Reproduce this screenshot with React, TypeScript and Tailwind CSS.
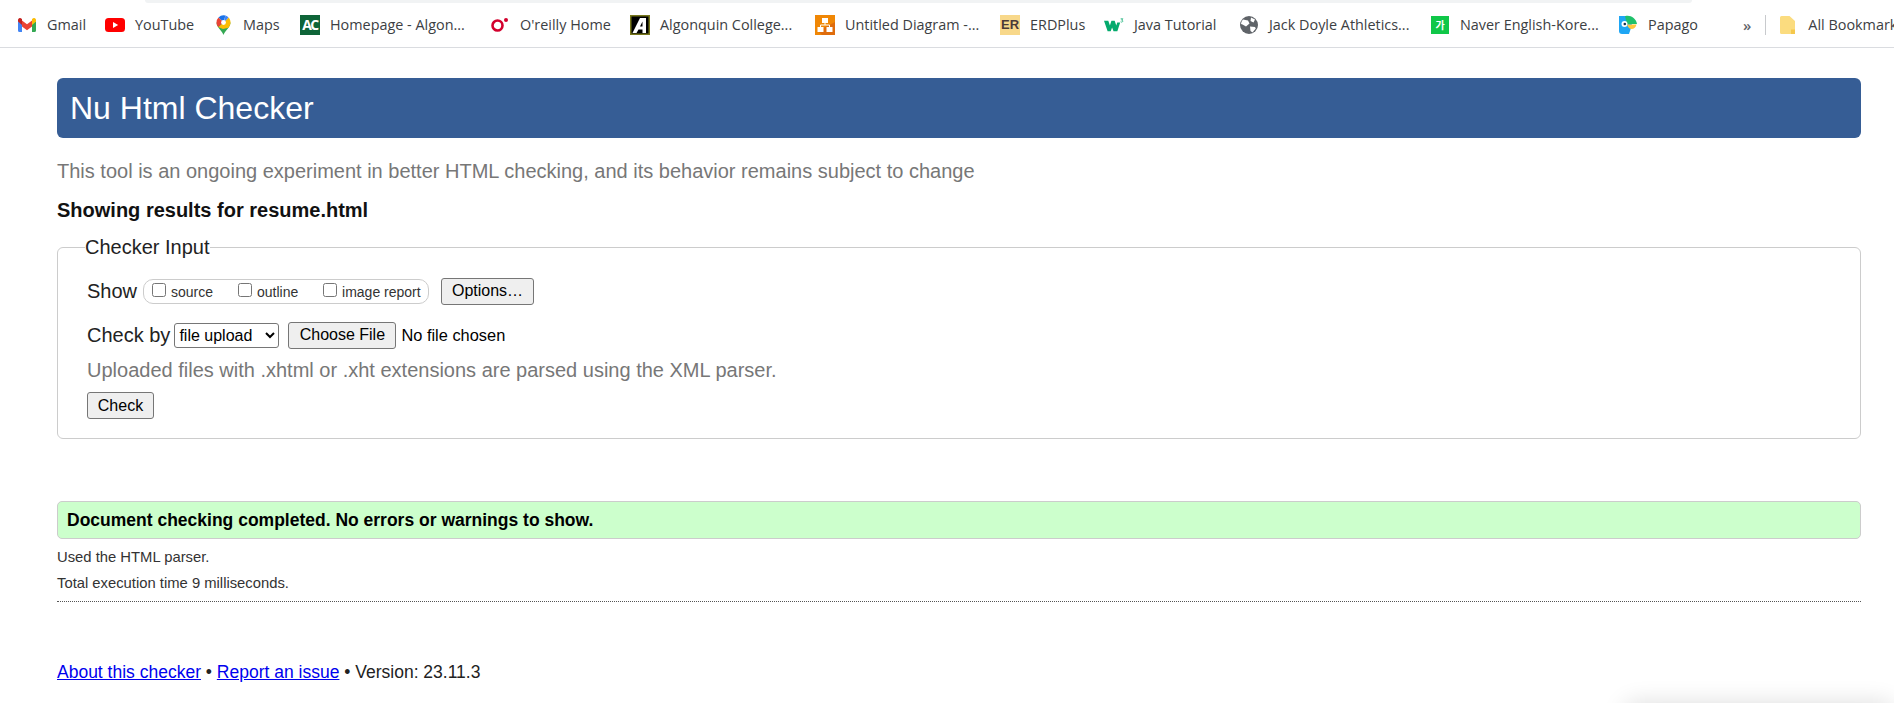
const arial = '[font-family:"Liberation_Sans",Arial,sans-serif]';

function GmailIcon() {
  return (
    <svg width="18" height="14" viewBox="0 0 18 14">
      <path d="M0 3v9.500A1.500 1.500 0 0 0 1.500 14H4V6z" fill="#4285f4" />
      <path d="M14 6v8h2.500a1.500 1.500 0 0 0 1.500-1.500V3z" fill="#34a853" />
      <path d="M4 8.500V2.500L9 6.300l5-3.800v6L9 12.200z" fill="#ea4335" />
      <path d="M0 3.500V2a2 2 0 0 1 3.200-1.600L4 1v6z" fill="#c5221f" />
      <path d="M14 7V1l.8-.6A2 2 0 0 1 18 2v1.500z" fill="#fbbc04" />
    </svg>
  );
}

function YoutubeIcon() {
  return (
    <svg width="20" height="14" viewBox="0 0 20 14">
      <rect width="20" height="14" rx="3.500" fill="#ff0000" />
      <path d="M8 4v6l5.200-3z" fill="#fff" />
    </svg>
  );
}

function MapsIcon() {
  return (
    <svg width="15" height="20" viewBox="0 0 15 20">
      <path d="M7.500 20c-.8-3.500-7-7.500-7-12.500h14c0 5-6.200 9-7 12.500z" fill="#34a853" />
      <path d="M2.200 12 7.500 7.500 12.500 2.500c1.300 1.300 2 3 2 5 0 2-1 3.700-2 5.200L7 14z" fill="#fbbc04" />
      <path d="M.5 7.500a7 7 0 0 1 2-5L7.500 7 2.200 12C1.200 10.700.5 9.200.5 7.500z" fill="#ea4335" />
      <path d="M2.500 2.500a7 7 0 0 1 7-2L7.500 7z" fill="#1a73e8" />
      <path d="M9.500.5a7 7 0 0 1 3 2L7.500 8z" fill="#4285f4" />
      <circle cx="7.500" cy="7.500" r="2.400" fill="#fff" />
    </svg>
  );
}

function AcIcon() {
  return (
    <span className="flex size-[20px] items-center justify-center bg-[#0e6438] text-[14px] leading-none font-bold tracking-[-1.500px] text-white">
      AC
    </span>
  );
}

function OreillyIcon() {
  return (
    <svg width="18" height="14" viewBox="0 0 18 14">
      <ellipse cx="6.500" cy="7.500" rx="5" ry="5" fill="none" stroke="#d3002d" strokeWidth="2.600" />
      <circle cx="15" cy="2" r="2" fill="#d3002d" />
    </svg>
  );
}

function AlgonquinIcon() {
  return (
    <svg width="20" height="20" viewBox="0 0 20 20">
      <rect x="0.750" y="0.750" width="18.500" height="18.500" fill="#000" stroke="#77771a" strokeWidth="1.500" />
      <path fillRule="evenodd" d="M2.500 18 10 3h6v15h-3.500v-3.500H8.500L6.500 18zM10 11.500h2.500V6.500z" fill="#fff" />
    </svg>
  );
}

function DiagramIcon() {
  return (
    <svg width="20" height="20" viewBox="0 0 20 20">
      <rect width="20" height="20" fill="#f08705" />
      <path d="M20 7v13H7l-4-4z" fill="#df6c0c" />
      <rect x="7" y="3" width="6" height="5" fill="#fff" />
      <rect x="2.500" y="12" width="6" height="5" fill="#fff" />
      <rect x="11.500" y="12" width="6" height="5" fill="#fff" />
      <path d="M10 8v2M5.500 12v-2h9v2" fill="none" stroke="#fff" />
    </svg>
  );
}

function ErIcon() {
  return (
    <span className={`flex size-[20px] items-center justify-center bg-[#f8d88a] text-[13px] leading-none font-bold text-[#4a3b38] ${arial}`}>
      ER
    </span>
  );
}

function W3Icon() {
  return (
    <svg width="21" height="14" viewBox="0 0 21 14">
      <path d="M0 2.500h4.500l1.700 5 1.600-5h3.400l1.700 5 1-3h3.100l-3 9H10l-1.500-4-1.500 4H3.800z" fill="#04aa6d" />
      <path d="M17.500.5h2.300l-1.300 1.400c1 .1 1.500.7 1.100 1.500-.4.700-1.400.7-2.100.2" fill="none" stroke="#04aa6d" strokeWidth="0.800" />
    </svg>
  );
}

function GlobeIcon() {
  return (
    <svg width="18" height="18" viewBox="0 0 18 18">
      <circle cx="9" cy="9" r="9" fill="#5f6368" />
      <path d="M3 3.500 8 4.500l1.500 3L6 10.500l-3.500-2L1 8C1.200 6.200 1.900 4.700 3 3.500zM11 1.500l4 2-1.500 3-3-1.500zM10 10.500l5 .5.800 1.500L12.500 16.500l-2-1.500z" fill="#fff" />
    </svg>
  );
}

function NaverIcon() {
  return (
    <span className="flex h-[18px] w-[18px] items-center justify-center bg-[#0fc748] text-[10px] leading-none font-bold text-white [font-family:'Noto_Sans_CJK_KR',sans-serif]">
      가
    </span>
  );
}

function PapagoIcon() {
  return (
    <svg width="18" height="19" viewBox="0 0 18 19">
      <path d="M0 1h9l4 9-3 9H3a3 3 0 0 1-3-3z" fill="#1ea6f4" />
      <path d="M6 1.200C11-.5 17 3 18 9H8z" fill="#1fc16b" />
      <circle cx="5.500" cy="9" r="3" fill="#fff" />
      <circle cx="5.800" cy="9" r="1.300" fill="#14304f" />
      <path d="M8 9.500h9.500c-.5 2.500-2.500 4.500-5 4.500-2 0-3.800-2-4.500-4.500z" fill="#ffc83d" />
    </svg>
  );
}

const bookmarks = [
  { name: 'Gmail', icon: <GmailIcon />, width: 'w-[88px]' },
  { name: 'YouTube', icon: <YoutubeIcon />, width: 'w-[108px]' },
  { name: 'Maps', icon: <MapsIcon />, width: 'w-[87px]' },
  { name: 'Homepage - Algon...', icon: <AcIcon />, width: 'w-[190px]' },
  { name: "O'reilly Home", icon: <OreillyIcon />, width: 'w-[140px]' },
  { name: 'Algonquin College...', icon: <AlgonquinIcon />, width: 'w-[185px]' },
  { name: 'Untitled Diagram -...', icon: <DiagramIcon />, width: 'w-[185px]' },
  { name: 'ERDPlus', icon: <ErIcon />, width: 'w-[104px]' },
  { name: 'Java Tutorial', icon: <W3Icon />, width: 'w-[135px]' },
  { name: 'Jack Doyle Athletics...', icon: <GlobeIcon />, width: 'w-[191px]' },
  { name: 'Naver English-Kore...', icon: <NaverIcon />, width: 'w-[188px]' },
  { name: 'Papago', icon: <PapagoIcon />, width: 'w-[125px]' },
];

function BookmarkBar() {
  return (
    <div className="relative h-[48px] overflow-hidden border-b border-[#dadce0] bg-white">
      <div className="ml-[145px] h-[3px] w-[1547px] rounded-b-[10px] bg-[#f1f3f4]" />
      <div className="flex h-[44px] items-center pl-[17px] text-[14.4px] whitespace-nowrap text-[#3c4043] [font-family:'Open_Sans',sans-serif]">
        {bookmarks.map((b) => (
          <div key={b.name} className={`flex shrink-0 items-center gap-[10px] ${b.width}`}>
            <span className="flex w-[20px] shrink-0 justify-center">{b.icon}</span>
            <span>{b.name}</span>
          </div>
        ))}
        <span className="shrink-0 text-[15px] font-semibold text-[#5f6368]">»</span>
        <span className="mx-[14px] h-[20px] w-px shrink-0 bg-[#c8cacd]" />
        <svg className="mr-[13px] shrink-0" width="15" height="18" viewBox="0 0 15 18">
          <path d="M1.500 0h8l5.500 5v11.500a1.500 1.500 0 0 1-1.500 1.500h-12A1.500 1.500 0 0 1 0 16.500v-15A1.500 1.500 0 0 1 1.500 0z" fill="#fbdc7f" />
          <path d="M11 13.500h4V18h-4z" fill="#f5c84c" />
        </svg>
        <span className="shrink-0">All Bookmarks</span>
      </div>
    </div>
  );
}

function NativeButton({ children, className }: { children: React.ReactNode; className: string }) {
  return (
    <button className={`rounded-[3px] border border-[#767676] bg-[#efefef] text-[16px] leading-none text-black ${className}`}>
      {children}
    </button>
  );
}

function ShowOption({ label, className }: { label: string; className: string }) {
  return (
    <label className={`flex items-center text-[14px] text-[#333] ${className}`}>
      <input type="checkbox" className="mr-[5px] mb-[3px] size-[14px]" />
      <span className="translate-y-[1px]">{label}</span>
    </label>
  );
}

export default function App() {
  return (
    <div className={`relative h-[703px] overflow-hidden bg-white text-[#222] ${arial}`}>
      <BookmarkBar />

      <main className="mr-[33px] ml-[57px]">
        <h1 className="mt-[30px] flex h-[60px] items-center rounded-[6px] bg-[#365d95] pl-[13px] text-[32px] font-normal text-white">
          Nu Html Checker
        </h1>
        <p className="mt-[21px] text-[20px] leading-[24px] text-[#777]">
          This tool is an ongoing experiment in better HTML checking, and its behavior remains subject to change
        </p>
        <p className="mt-[15px] text-[20px] leading-[24px] font-bold text-[#111]">Showing results for resume.html</p>

        <fieldset className="mt-[14px] h-[203px] rounded-[6px] border border-[#ccc] pl-[29px]">
          <legend className="ml-[-2px] px-0 text-[20px] leading-[23px] text-[#222]">Checker Input</legend>

          <div className="mt-[17px] flex h-[30px] items-center">
            <span className="mr-[6px] text-[20px]">Show</span>
            <div className="flex h-[25px] w-[286px] items-center rounded-[10px] border border-[#ccc] pl-[8px]">
              <ShowOption label="source" className="w-[86px]" />
              <ShowOption label="outline" className="w-[85px]" />
              <ShowOption label="image report" className="" />
            </div>
            <NativeButton className="ml-[12px] h-[27px] w-[93px]">Options…</NativeButton>
          </div>

          <div className="mt-[14px] flex h-[30px] items-center">
            <span className="mr-[4px] text-[20px]">Check by</span>
            <select className="h-[25px] w-[105px] rounded-[3px] border border-[#767676] bg-white text-[16px] text-black">
              <option>file upload</option>
            </select>
            <NativeButton className="ml-[9px] h-[27px] w-[108px]">Choose File</NativeButton>
            <span className="ml-[5px] text-[16.400px] text-black">No file chosen</span>
          </div>

          <p className="mt-[8px] text-[20px] leading-[24px] text-[#777]">
            Uploaded files with .xhtml or .xht extensions are parsed using the XML parser.
          </p>

          <NativeButton className="mt-[10px] h-[27px] w-[67px]">Check</NativeButton>
        </fieldset>

        <div className="mt-[62px] flex h-[38px] items-center rounded-[5px] border border-[#ccc] bg-[#ccffcc] pl-[9px] text-[17.500px] font-bold text-black">
          Document checking completed. No errors or warnings to show.
        </div>
        <p className="mt-[10px] text-[14.800px] leading-[17px] text-[#333]">Used the HTML parser.</p>
        <p className="mt-[9px] text-[14.800px] leading-[17px] text-[#333]">Total execution time 9 milliseconds.</p>
        <div className="mt-[9px] border-t border-dotted border-[#555]" />

        <p className="mt-[60px] text-[17.500px] leading-[21px]">
          <a className="text-[#0000ee] underline" href="#about">About this checker</a>
          {' • '}
          <a className="text-[#0000ee] underline" href="#issue">Report an issue</a>
          {' • Version: 23.11.3'}
        </p>
      </main>

      {/* window shadow in the corner */}
      <div className="absolute right-0 bottom-[-24px] h-[24px] w-[270px] rounded-[20px] shadow-[0_0_24px_rgba(0,0,0,0.14)]" />
    </div>
  );
}
